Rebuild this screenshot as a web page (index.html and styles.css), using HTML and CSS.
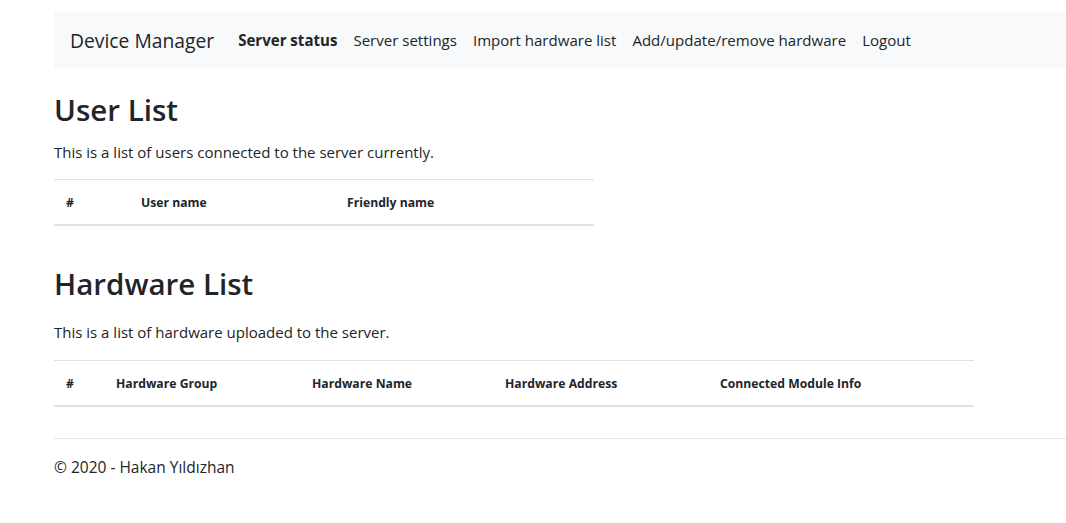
FILE: index.html
```html
<!DOCTYPE html>
<html lang="en">
<head>
<meta charset="utf-8">
<title>Device Manager</title>
<link rel="stylesheet" href="styles.css">
</head>
<body>
<div class="page">
  <header class="navbar">
    <span class="brand">Device Manager</span>
    <nav class="nav">
      <a class="nav-link active">Server status</a>
      <a class="nav-link">Server settings</a>
      <a class="nav-link">Import hardware list</a>
      <a class="nav-link">Add/update/remove hardware</a>
      <a class="nav-link">Logout</a>
    </nav>
  </header>
  <main class="main">
    <section class="section">
      <h1 class="title">User List</h1>
      <p class="lead">This is a list of users connected to the server currently.</p>
      <table class="table table-users">
        <thead>
          <tr><th class="c-u1">#</th><th class="c-u2">User name</th><th class="c-u3">Friendly name</th></tr>
        </thead>
      </table>
    </section>
    <section class="section section-hw">
      <h1 class="title">Hardware List</h1>
      <p class="lead">This is a list of hardware uploaded to the server.</p>
      <table class="table table-hw">
        <thead>
          <tr><th class="c-h1">#</th><th class="c-h2">Hardware Group</th><th class="c-h3">Hardware Name</th><th class="c-h4">Hardware Address</th><th class="c-h5">Connected Module Info</th></tr>
        </thead>
      </table>
    </section>
  </main>
  <footer class="footer">© 2020 - Hakan Yıldızhan</footer>
</div>
</body>
</html>
```

FILE: styles.css
```css
html, body {
  margin: 0;
  padding: 0;
  background: #fff;
}
body {
  font-family: "Open Sans", "Noto Sans", sans-serif;
  color: #212529;
  font-size: 15px;
}
.page {
  padding: 12px 0 0 54px;
}
.navbar {
  background: #f8f9fa;
  height: 56px;
  display: flex;
  align-items: center;
  padding: 0 16px;
}
.brand {
  font-size: 19.3px;
  color: #212529;
  margin-right: 16px;
  white-space: nowrap;
}
.nav {
  display: flex;
}
.nav-link {
  padding: 0 8px;
  font-size: 15.05px;
  color: #212529;
  white-space: nowrap;
}
.nav-link.active {
  font-weight: 700;
}
.main {
  width: 920px;
}
.title {
  margin: 0;
  font-size: 29.5px;
  font-weight: 600;
  line-height: 38px;
}
.section {
  padding-top: 23px;
}
.section-hw {
  padding-top: 39px;
}
.lead {
  margin: 12px 0 16px;
  line-height: 22px;
}
.section-hw .lead {
  margin: 18px 0 17px;
}
.table {
  border-collapse: collapse;
  table-layout: fixed;
}
.table-users { width: 540px; }
.table-hw { width: 920px; }
.table th {
  text-align: left;
  font-size: 12.2px;
  font-weight: 700;
  padding: 14px 12px 12px;
  height: 18px;
  border-top: 1px solid #dee2e6;
  border-bottom: 2px solid #dee2e6;
  line-height: 18px;
}
.c-u1 { width: 51px; }
.c-u2 { width: 182px; }
.c-u3 { width: 235px; }
.c-h1 { width: 26px; }
.c-h2 { width: 172px; }
.c-h3 { width: 169px; }
.c-h4 { width: 191px; }
.c-h5 { width: 242px; }
.footer {
  margin-top: 31px;
  border-top: 1px solid #e5e5e5;
  padding-top: 17px;
  line-height: 22px;
  font-size: 15.5px;
}
```
